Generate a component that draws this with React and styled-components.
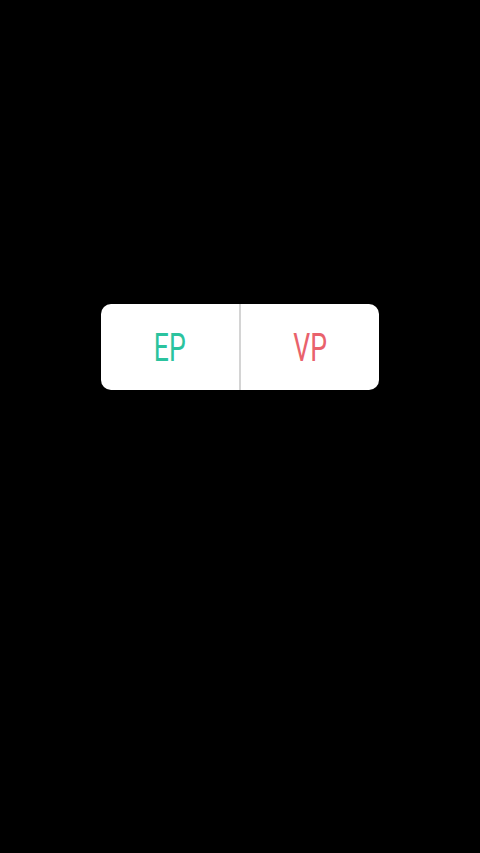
import styled, { createGlobalStyle } from "styled-components";

const Global = createGlobalStyle`
	html, body {
		margin: 0;
		padding: 0;
		background: #000;
	}
`;

const Screen = styled.main`
	width: 480px;
	height: 853px;
	background: #000;
	display: flex;
	justify-content: center;
	align-items: flex-start;
	padding-top: 304px;
	box-sizing: border-box;
`;

const Card = styled.div`
	width: 278px;
	height: 86px;
	background: #fff;
	border-radius: 10px;
	display: grid;
	grid-template-columns: 138px 2px 1fr;
	overflow: hidden;
`;

const Divider = styled.div`
	background: #d4d4d4;
`;

const Choice = styled.button`
	border: 0;
	background: transparent;
	display: flex;
	align-items: center;
	justify-content: center;
	padding: 0;
	cursor: pointer;
`;

const Label = styled.span`
	display: inline-block;
	font-family: Roboto, "Liberation Sans", sans-serif;
	font-weight: 400;
	font-size: 38px;
	line-height: 1;
	color: ${(p) => p.$color};
	transform: scaleX(0.7);
	margin-top: 2px;
`;

const App = () => {
	return (
		<>
			<Global />
			<Screen>
				<Card>
					<Choice>
						<Label $color="#2bc39e">EP</Label>
					</Choice>
					<Divider />
					<Choice>
						<Label $color="#e9626c">VP</Label>
					</Choice>
				</Card>
			</Screen>
		</>
	);
};

export default App;
